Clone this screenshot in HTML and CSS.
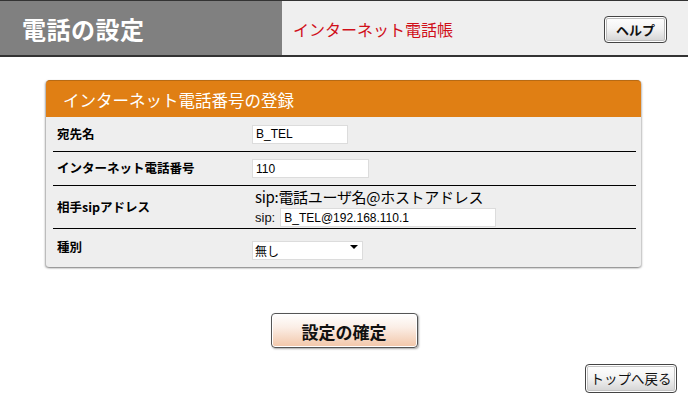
FILE: index.html
```html
<!DOCTYPE html>
<html lang="ja">
<head>
<meta charset="utf-8">
<title>電話の設定</title>
<link rel="stylesheet" href="styles.css">
</head>
<body>
<header class="topbar">
  <div class="title-block"><h1 class="title">電話の設定</h1></div>
  <div class="sub-block">
    <span class="subtitle">インターネット電話帳</span>
    <button class="btn btn-help" type="button">ヘルプ</button>
  </div>
</header>
<main class="content">
  <section class="card">
    <div class="card-head">インターネット電話番号の登録</div>
    <div class="rows">
      <div class="row row-1">
        <div class="label">宛先名</div>
        <div class="value"><input class="field field-name" type="text" value="B_TEL"></div>
      </div>
      <div class="row row-2">
        <div class="label">インターネット電話番号</div>
        <div class="value"><input class="field field-num" type="text" value="110"></div>
      </div>
      <div class="row row-3">
        <div class="label">相手sipアドレス</div>
        <div class="value value-stack">
          <div class="hint">sip:電話ユーザ名@ホストアドレス</div>
          <div class="sip-line"><span class="sip-prefix">sip:</span><input class="field field-sip" type="text" value="B_TEL@192.168.110.1"></div>
        </div>
      </div>
      <div class="row row-4">
        <div class="label">種別</div>
        <div class="value"><span class="select-wrap"><select class="field field-select"><option>無し</option></select></span></div>
      </div>
    </div>
  </section>
  <div class="actions">
    <button class="btn btn-confirm" type="button">設定の確定</button>
  </div>
  <div class="footer">
    <button class="btn btn-back" type="button">トップへ戻る</button>
  </div>
</main>
</body>
</html>
```
FILE: styles.css
```css
* { box-sizing: border-box; }
html, body { margin: 0; padding: 0; background: #fff; }
body {
  width: 688px;
  height: 406px;
  overflow: hidden;
  font-family: "Noto Sans CJK JP", "Liberation Sans", sans-serif;
  color: #000;
}

.topbar {
  display: flex;
  height: 57px;
  border-top: 1px solid #333;
  border-bottom: 2px solid #333;
}
.title-block {
  width: 282px;
  background: #808080;
  display: flex;
  align-items: center;
  padding-left: 22px;
}
.title {
  margin: 0;
  color: #fff;
  font-size: 24px;
  font-weight: bold;
  letter-spacing: 0.5px;
  line-height: 1;
  padding-top: 2px;
}
.sub-block {
  flex: 1;
  background: #efefef;
  display: flex;
  align-items: center;
  justify-content: space-between;
  padding: 0 21px 0 11px;
}
.subtitle {
  color: #d0101a;
  font-size: 16px;
  line-height: 1;
  padding-top: 2px;
}

.btn {
  font-family: "Noto Sans CJK JP", "Liberation Sans", sans-serif;
  color: #111;
  cursor: pointer;
  padding: 0;
  line-height: 1;
}
.btn-help {
  width: 63px;
  height: 27px;
  margin-top: 3px;
  font-size: 13px;
  font-weight: bold;
  border: 1px solid #444;
  border-radius: 4px;
  background: linear-gradient(#ffffff 0%, #f4f4f4 45%, #d2d2d2 100%);
  box-shadow: inset 0 0 0 1px #fff, inset 0 0 0 2px #bdbdbd;
}

.content {
  padding: 23px 47px 0 46px;
}
.card {
  background: #eeeeee;
  border-radius: 4px 4px 3px 3px;
  box-shadow: -1px 1px 2px rgba(0,0,0,0.35), 1px 1px 2px rgba(0,0,0,0.25);
  padding-bottom: 1px;
}
.card-head {
  height: 37px;
  background: #e07f14;
  border-radius: 4px 4px 0 0;
  border-top: 1px solid #b76a14;
  color: #fff;
  font-size: 16.5px;
  line-height: 1;
  padding: 11px 0 0 17px;
}
.rows {
  padding: 0 5px 0 7px;
}
.row {
  display: flex;
  align-items: center;
  border-bottom: 1px solid #000;
}
.row-1 { height: 35px; }
.row-2 { height: 34px; }
.row-3 { height: 43px; }
.row-4 { height: 37px; border-bottom: none; }
.label {
  width: 199px;
  padding-left: 4px;
  font-size: 12.5px;
  font-weight: bold;
  line-height: 1;
}
.value {
  flex: 1;
  display: flex;
  align-items: center;
}
.value-stack {
  flex-direction: column;
  align-items: flex-start;
  padding-top: 1px;
}
.hint {
  font-size: 15px;
  line-height: 18px;
  padding-left: 3px;
  letter-spacing: -0.3px;
}
.sip-line {
  display: flex;
  align-items: center;
  margin-top: 2px;
}
.sip-prefix {
  font-family: "Liberation Sans", sans-serif;
  font-size: 13px;
  padding: 0 5px 0 3px;
  color: #111;
}
.field {
  font-family: "Liberation Sans", sans-serif;
  font-size: 12px;
  height: 19px;
  padding: 0 0 0 3px;
  border: 1px solid #dcdcdc;
  background: #fff;
  color: #000;
  outline: none;
}
.field-name { width: 96px; }
.field-num { width: 117px; }
.field-sip { width: 216px; height: 19px; }
.select-wrap {
  position: relative;
  display: inline-block;
  margin-top: 2px;
}
.field-select {
  -webkit-appearance: none;
  appearance: none;
  width: 111px;
  height: 19px;
  font-family: "Noto Sans CJK JP", sans-serif;
  font-size: 12px;
  padding-left: 2px;
  border-radius: 0;
}
.select-wrap::after {
  content: "";
  position: absolute;
  right: 5px;
  top: 8px;
  border-left: 4px solid transparent;
  border-right: 4px solid transparent;
  border-top: 4px solid #000;
}

.actions {
  display: flex;
  justify-content: center;
  padding-left: 1px;
  margin-top: 46px;
}
.btn-confirm {
  width: 147px;
  height: 35px;
  font-size: 17px;
  font-weight: bold;
  border: 1px solid #555;
  border-radius: 4px;
  background: linear-gradient(#ffffff 0%, #fbeee6 40%, #f2c6a8 100%);
  box-shadow: inset 0 0 0 1px #fff, 1px 1px 2px rgba(0,0,0,0.35);
  padding-top: 1px;
}
.footer {
  display: flex;
  justify-content: flex-end;
  margin-top: 16px;
  margin-right: -36px;
}
.btn-back {
  width: 92px;
  height: 29px;
  font-size: 13.5px;
  border: 1px solid #444;
  border-radius: 4px;
  background: linear-gradient(#ffffff 0%, #f4f4f4 45%, #d2d2d2 100%);
  box-shadow: inset 0 0 0 1px #fff, inset 0 0 0 2px #c4c4c4;
}
```
